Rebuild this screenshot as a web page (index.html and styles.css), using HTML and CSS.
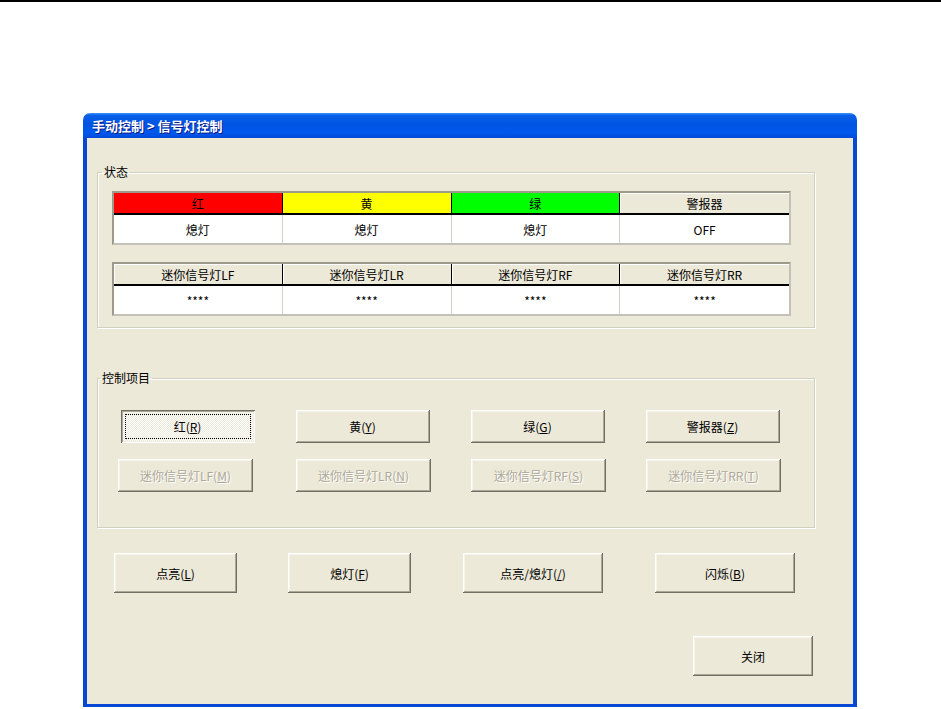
FILE: index.html
```html
<!DOCTYPE html>
<html lang="zh-CN">
<head>
    <meta charset="UTF-8">
    <title>手动控制 &gt; 信号灯控制</title>
    <link rel="stylesheet" href="styles.css">
</head>
<body>
    <div class="top-rule"></div>

    <div class="window">
        <div class="title-bar">手动控制 &gt; 信号灯控制</div>
        <div class="window-body">

            <fieldset class="group status-group">
                <legend>状态</legend>
                <div class="status-table">
                    <div class="th red">红</div>
                    <div class="th yellow">黄</div>
                    <div class="th green">绿</div>
                    <div class="th">警报器</div>
                    <div class="td">熄灯</div>
                    <div class="td">熄灯</div>
                    <div class="td">熄灯</div>
                    <div class="td">OFF</div>
                </div>
                <div class="status-table">
                    <div class="th">迷你信号灯LF</div>
                    <div class="th">迷你信号灯LR</div>
                    <div class="th">迷你信号灯RF</div>
                    <div class="th">迷你信号灯RR</div>
                    <div class="td">****</div>
                    <div class="td">****</div>
                    <div class="td">****</div>
                    <div class="td">****</div>
                </div>
            </fieldset>

            <fieldset class="group control-group">
                <legend>控制项目</legend>
                <div class="button-grid">
                    <button class="btn small focused">红(<u>R</u>)</button>
                    <button class="btn small">黄(<u>Y</u>)</button>
                    <button class="btn small">绿(<u>G</u>)</button>
                    <button class="btn small">警报器(<u>Z</u>)</button>
                    <button class="btn wide first" disabled>迷你信号灯LF(<u>M</u>)</button>
                    <button class="btn wide" disabled>迷你信号灯LR(<u>N</u>)</button>
                    <button class="btn wide" disabled>迷你信号灯RF(<u>S</u>)</button>
                    <button class="btn wide" disabled>迷你信号灯RR(<u>T</u>)</button>
                </div>
            </fieldset>

            <div class="action-row">
                <button class="btn action">点亮(<u>L</u>)</button>
                <button class="btn action">熄灯(<u>F</u>)</button>
                <button class="btn action long">点亮/熄灯(<u>/</u>)</button>
                <button class="btn action long">闪烁(<u>B</u>)</button>
            </div>

            <div class="close-row">
                <button class="btn close-btn">关闭</button>
            </div>
        </div>
    </div>
</body>
</html>
```

FILE: styles.css
```css
body {
    margin: 0;
    background-color: white;
    font-family: "Noto Sans CJK SC", "Liberation Sans", sans-serif;
    font-size: 12px;
    color: black;
}
.top-rule {
    height: 2px;
    background-color: black;
}
.window {
    width: 774px;
    margin: 111px 0 0 83px;
}
.title-bar {
    height: 25px;
    line-height: 25px;
    padding-left: 9px;
    color: white;
    font-weight: bold;
    font-size: 13px;
    text-shadow: 1px 1px #0A1883;
    border-radius: 7px 7px 0 0;
    background: linear-gradient(to bottom, #3D95FF 0%, #0A5FE8 10%, #0054E3 45%, #0058EE 80%, #0049D5 100%);
}
.window-body {
    height: 566px;
    background-color: #ECE9D8;
    border: 4px solid #0847D4;
    border-top: none;
    border-bottom-width: 3px;
    padding: 0 0 0 10px;
    width: 756px;
    display: flex;
    flex-direction: column;
}
.group {
    margin: 0;
    border: 1px solid #D0D0BF;
    box-shadow: inset 1px 1px white, 1px 1px white;
    box-sizing: border-box;
    padding: 0;
}
.group legend {
    padding: 0 2px;
    margin-left: 0;
    line-height: 14px;
}
.status-group {
    margin-top: 27px;
    width: 718px;
    height: 163px;
    padding: 12px 0 0 14px;
}
.status-group legend {
    margin-left: -10px;
}
.status-table {
    width: 679px;
    height: 54px;
    display: grid;
    grid-template-columns: repeat(4, 1fr);
    grid-template-rows: 22px 28px;
    border-top: 2px solid #9D9A8C;
    border-left: 2px solid #9D9A8C;
    border-right: 2px solid #C4C2B8;
    border-bottom: 2px solid #C4C2B8;
    box-sizing: border-box;
    background-color: white;
    margin-bottom: 17px;
}
.th {
    background-color: #ECE9D8;
    border-right: 1px solid black;
    border-bottom: 2px solid black;
    box-shadow: inset 1px 1px white;
    display: flex;
    align-items: center;
    justify-content: center;
}
.th:nth-child(4) {
    border-right: none;
}
.th.red {
    background-color: #FF0000;
    box-shadow: none;
}
.th.yellow {
    background-color: #FFFF00;
    box-shadow: none;
}
.th.green {
    background-color: #00FF00;
    box-shadow: none;
}
.td {
    border-right: 1px solid #D4D0C8;
    display: flex;
    align-items: center;
    justify-content: center;
}
.td:last-child {
    border-right: none;
}
.control-group {
    margin-top: 43px;
    width: 718px;
    height: 157px;
    padding: 24px 0 0 2px;
}
.button-grid {
    display: grid;
    grid-template-columns: repeat(4, 175px);
    grid-template-rows: 34px 33px;
    row-gap: 16px;
    justify-items: center;
    align-items: center;
}
.btn {
    font-family: "Noto Sans CJK SC", "Liberation Sans", sans-serif;
    font-size: 12px;
    color: black;
    background-color: #ECE9D8;
    border: none;
    padding: 0;
    box-shadow: inset -1px -1px #716F64, inset 1px 1px #FFFFFF, inset -2px -2px #ACA899, inset 2px 2px #F5F4EA;
    cursor: pointer;
}
.btn:disabled {
    color: #ACA899;
    text-shadow: 1px 1px white;
    cursor: default;
}
.btn.small {
    width: 134px;
    height: 33px;
}
.btn.wide {
    width: 135px;
    height: 33px;
    margin-left: 2px;
}
.btn.wide.first {
    margin-left: 0;
    margin-right: 4px;
}
.btn.focused {
    outline: 1px dotted black;
    outline-offset: -5px;
    background: repeating-conic-gradient(#FFFFFF 0 25%, #ECE9D8 0 50%) 0 0 / 2px 2px;
    box-shadow: inset 1px 1px #716F64, inset -1px -1px #FFFFFF, inset 2px 2px #ACA899, inset -2px -2px #F1EFE2, 0 0 0 1px #ECE9D8;
}
.action-row {
    display: flex;
    gap: 51px;
    margin: 25px 0 0 17px;
}
.btn.action {
    width: 123px;
    height: 40px;
}
.btn.action.long {
    width: 140px;
    margin-left: 1px;
}
.close-row {
    display: flex;
    justify-content: flex-end;
    margin: 43px 40px 0 0;
}
.btn.close-btn {
    width: 120px;
    height: 40px;
}
```
